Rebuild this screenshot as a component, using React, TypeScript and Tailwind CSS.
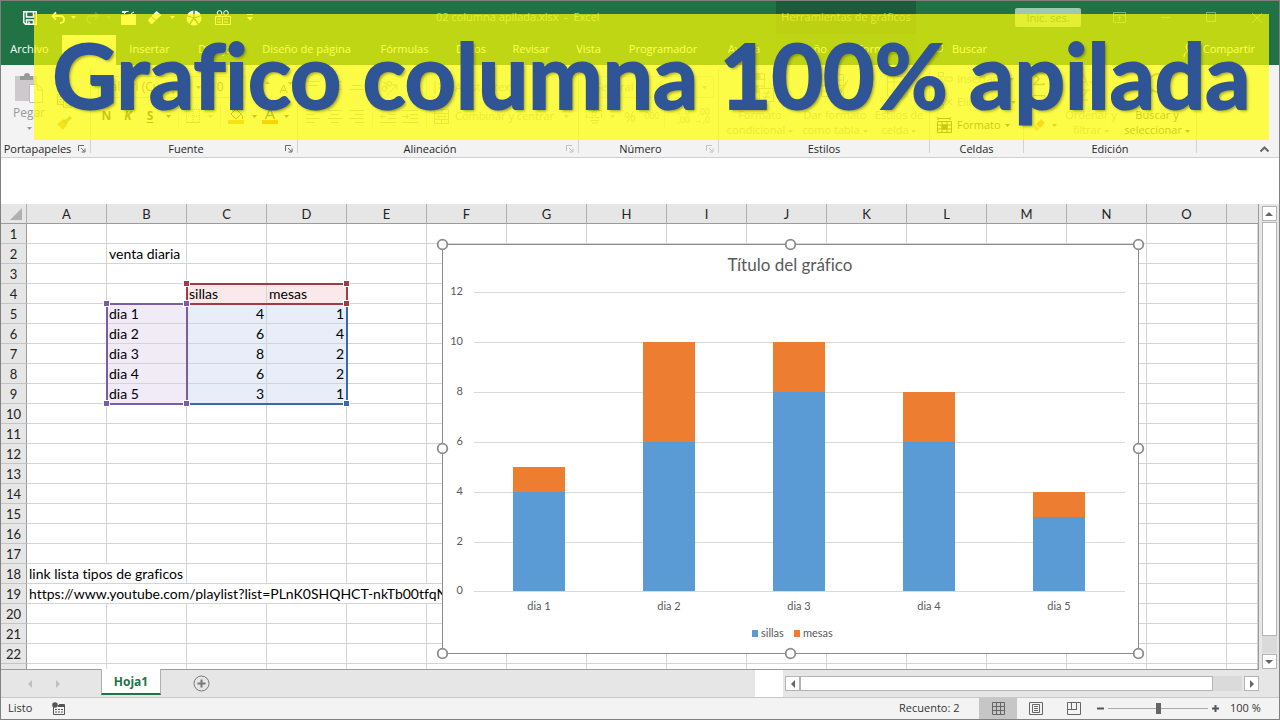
import type { ReactNode } from 'react';

const UI = "font-['Open_Sans','Noto_Sans',sans-serif]";
const CELL = "font-['Lato','Liberation_Sans',sans-serif] [font-variant-ligatures:none]";

const letters = 'ABCDEFGHIJKLMNO'.split('');

const days = [
  { name: 'dia 1', sillas: 4, mesas: 1 },
  { name: 'dia 2', sillas: 6, mesas: 4 },
  { name: 'dia 3', sillas: 8, mesas: 2 },
  { name: 'dia 4', sillas: 6, mesas: 2 },
  { name: 'dia 5', sillas: 3, mesas: 1 },
];

function Icon({ w = 16, h = 16, className = '', children }: { w?: number; h?: number; className?: string; children: ReactNode }) {
  return (
    <svg width={w} height={h} viewBox={`0 0 ${w} ${h}`} fill="none" stroke="currentColor" className={`shrink-0 ${className}`} aria-hidden="true">
      {children}
    </svg>
  );
}

function Caret({ className = '' }: { className?: string }) {
  return (
    <Icon w={5} h={3} className={className}>
      <path d="M0 0h5L2.5 3z" fill="currentColor" stroke="none" />
    </Icon>
  );
}

function Launcher() {
  return (
    <Icon w={8} h={8}>
      <path d="M.5 6V.5H6M3 3l3.500 3.500M7 3.500V7H3.500" />
    </Icon>
  );
}

/* ---------- title bar and tabs ---------- */

const tabs = [
  { label: 'Insertar', w: 'w-[67px]' },
  { label: 'Dibujo', w: 'w-[64px]' },
  { label: 'Diseño de página', w: 'w-[119px]' },
  { label: 'Fórmulas', w: 'w-[77px]' },
  { label: 'Datos', w: 'w-[56px]' },
  { label: 'Revisar', w: 'w-[64px]' },
  { label: 'Vista', w: 'w-[51px]' },
  { label: 'Programador', w: 'w-[98px]' },
  { label: 'Ayuda', w: 'w-[64px]' },
];

function TitleBar() {
  return (
    <div className="grid h-[33px] grid-cols-[435px_340px_140px_1fr] bg-[#217346] text-white">
      <div className="flex items-center pl-[22px]">
        <button aria-label="Guardar" className="flex w-[28px]">
          <Icon w={14} h={14}><path d="M.75.75h12.500v12.500H2.500L.75 11.500zM3.500 1v5h7V1M3.500 13V9h7v4M6 10.500v2.500" strokeWidth="1.5" /></Icon>
        </button>
        <button aria-label="Deshacer" className="flex w-[35px] items-center gap-1.5">
          <Icon w={14} h={14}><path d="M5 1.500L1.500 5 5 8.500M1.500 5H9c3 0 4 2 4 3.500S12 12 9 12" strokeWidth="1.8" /></Icon>
          <Caret />
        </button>
        <button aria-label="Rehacer" className="flex w-[35px] items-center gap-1.5 opacity-20">
          <Icon w={14} h={14}><path d="M9 1.500L12.500 5 9 8.500M12.500 5H5C2 5 1 7 1 8.500S2 12 5 12" strokeWidth="1.8" /></Icon>
          <Caret />
        </button>
        <button aria-label="Abrir" className="flex w-[27px]">
          <Icon w={16} h={14}><path d="M0 4h7l1-1h7v11H0zM1 0h4v2H1zM8 1h4" fill="currentColor" stroke="none" /><path d="M3.500 3V.5h4M10 2.500l3-1.500" /></Icon>
        </button>
        <button aria-label="Borrar" className="flex w-[38px] items-center gap-2">
          <Icon w={14} h={13}><path d="M8.500 0l5 4-5.500 5-4.500-4zM3 5.500L7.500 9.500 4.500 13H3L0 9.500z" fill="currentColor" stroke="none" /></Icon>
          <Caret />
        </button>
        <button aria-label="Gráfico circular" className="flex w-[29px]">
          <Icon w={16} h={16}><circle cx="8" cy="8" r="7.500" fill="currentColor" stroke="none" /><path d="M8 8V0M8 8l7.500-2.500M8 8l5 7M8 8l-5 7M8 8L.5 5.500" stroke="#217346" strokeWidth="1.300" /></Icon>
        </button>
        <button aria-label="Tabla" className="flex w-[32px]">
          <Icon w={16} h={16}><path d="M.5 6.500h15v8H.5zM2 9h4M9 9h4M2 12h4M9 12h4M7.500 7v8" /><circle cx="4.500" cy="3" r="2.300" /><circle cx="11" cy="3" r="2.300" /></Icon>
        </button>
        <button aria-label="Personalizar barra" className="flex">
          <Icon w={6} h={7}><path d="M0 .5h6" /><path d="M0 3h6L3 6.500z" fill="currentColor" stroke="none" /></Icon>
        </button>
      </div>
      <div className="flex items-center whitespace-pre text-[11px] text-white/60">02 columna apilada.xlsx  -  Excel</div>
      <div className="flex items-center justify-center whitespace-nowrap bg-[#1c5c3a] text-[11px] text-white/60">Herramientas de gráficos</div>
      <div className="flex items-center justify-end">
        <button className="mr-8 h-[19px] w-[66px] rounded-xs bg-[#a0c8b1] text-[11px] leading-[18px] text-[#217346]">Inic. ses.</button>
        <div className="flex gap-[34px] pr-[16px] text-white/40">
          <button aria-label="Opciones de la cinta"><Icon w={13} h={11}><path d="M.5.5h12v10H.5zM1 3h11M6.500 9V5M4.500 6.500l2-2 2 2" /></Icon></button>
          <button aria-label="Minimizar"><Icon w={12} h={11}><path d="M1 5.500h9" /></Icon></button>
          <button aria-label="Maximizar"><Icon w={11} h={11}><path d="M.5.5h9v9h-9z" /></Icon></button>
          <button aria-label="Cerrar"><Icon w={12} h={12}><path d="M1 1l10 10M11 1L1 11" /></Icon></button>
        </div>
      </div>
    </div>
  );
}

function TabBar() {
  return (
    <nav className="flex h-[31px] items-stretch whitespace-nowrap bg-[#217346] text-[11px] text-white">
      <button className="w-[61px] pr-1">Archivo</button>
      <button className="mt-px w-[54px] bg-[#f3f3f3] text-[#217346]">Inicio</button>
      {tabs.map((t) => (
        <button key={t.label} className={t.w}>{t.label}</button>
      ))}
      <div className="flex w-[140px] bg-[#1f6d42]">
        <button className="w-[66px]">Diseño</button>
        <button className="w-[74px]">Formato</button>
      </div>
      <label className="flex items-center gap-2 pl-[14px]">
        <Icon w={14} h={14}><circle cx="9" cy="5" r="4" /><path d="M6 8L.5 13.500" strokeWidth="1.300" /></Icon>
        <input type="text" aria-label="Buscar" placeholder="Buscar" className="w-[60px] bg-transparent outline-none placeholder:text-white" />
      </label>
      <button className="ml-auto flex items-center gap-1.5 pr-[24px]">
        <Icon w={14} h={15}><circle cx="7" cy="5" r="4" /><path d="M1 15c0-3 2-5 4-6M10 12h4M12 10v4" /></Icon>
        Compartir
      </button>
    </nav>
  );
}

/* ---------- ribbon ---------- */

function Group({ title, w, launcher, dimLauncher, children }: { title: string; w: string; launcher?: boolean; dimLauncher?: boolean; children: ReactNode }) {
  return (
    <section className={`flex shrink-0 ${w}`}>
      <div className="flex min-w-0 flex-1 flex-col">
        <div className="h-[75px]">{children}</div>
        <div className="flex h-[17px] items-center">
          <h2 className={`flex-1 text-center text-[11px] leading-4 text-[#262626] ${launcher ? 'pr-1' : ''}`}>{title}</h2>
          {launcher && (
            <button aria-label={`Más opciones de ${title}`} className={`mr-1 ${dimLauncher ? 'text-[#c0c0c0]' : 'text-[#666]'}`}><Launcher /></button>
          )}
        </div>
      </div>
      <div className="my-1 w-px bg-[#d2d2d2]" />
    </section>
  );
}

function Lines({ rows }: { rows: [number, number][] }) {
  return (
    <Icon w={14} h={13}>
      {rows.map(([x, w], i) => <path key={i} d={`M${x} ${i * 4 + 0.5}h${w}`} />)}
    </Icon>
  );
}

function Ribbon() {
  return (
    <div className="flex h-[93px] overflow-hidden border-b border-[#d0d0d0] bg-[#f3f3f3] text-[11px] text-[#444]">
      <Group title="Portapapeles" w="w-[90px]" launcher>
        <div className="flex text-[#999]">
          <button className="flex w-[56px] flex-col items-center pt-2 text-[12px] leading-4">
            <Icon w={28} h={30}>
              <path d="M0 3h22v25H0z" fill="#cdc9cd" stroke="none" />
              <path d="M5 3h4a3 3 0 016 0h3v4H5z" fill="#999" stroke="none" />
              <path d="M14.500 11.500h8l5 5v13h-13z" fill="#fafafa" stroke="#bbb" /><path d="M22.500 12v5h5" stroke="#bbb" />
            </Icon>
            <span className="pt-0.5">Pegar</span>
            <Caret className="mt-1.5" />
          </button>
          <div className="flex flex-col gap-2 pt-[29px] text-[#999]">
            <button aria-label="Copiar"><Icon w={15} h={14}><path d="M.5.5h7v10h-7zM2 3h4M2 5.500h3M2 8h3" /><path d="M6.500 3.500h8v10h-8zM8 6.500h5M8 9h5M8 11.500h5" fill="#f3f3f3" /></Icon></button>
            <button aria-label="Copiar formato"><Icon w={15} h={14}><path d="M0 8l5-4 5 5-4 5z" fill="#e0a060" stroke="none" /><path d="M8 6l6-5M6 4l4 4" strokeWidth="3" /></Icon></button>
          </div>
        </div>
      </Group>

      <Group title="Fuente" w="w-[207px]" launcher>
        <div className="flex flex-col gap-[7px] pt-[11px] pl-[7px]">
          <div className="flex items-center text-[12px] text-[#777]">
            <button className="flex h-[22px] w-[108px] items-center justify-between border border-[#d0d0d0] px-1 whitespace-nowrap">Calibri (Cuerpo)<Caret /></button>
            <button className="flex h-[22px] w-[40px] items-center justify-between border border-l-0 border-[#d0d0d0] px-1">10<Caret /></button>
            <button aria-label="Aumentar tamaño" className="flex w-[25px] justify-end"><Icon w={16} h={14}><path d="M1 13L5 3l4 10M2.500 10h5" /><path d="M10 4l2.500-3L15 4z" fill="currentColor" stroke="none" /></Icon></button>
            <button aria-label="Disminuir tamaño" className="flex w-[22px] justify-end"><Icon w={14} h={14}><path d="M1 13l3.500-8L8 13M2 10.500h5" /><path d="M9 2l2.500 3L14 2z" fill="currentColor" stroke="none" /></Icon></button>
          </div>
          <div className="flex h-[22px] items-center">
            <button className="w-[17px] text-[12px] font-bold">N</button>
            <button className="w-[26px] text-[12px] font-bold italic">K</button>
            <button className="w-[18px] text-[12px] font-bold underline underline-offset-2">S</button>
            <button aria-label="Subrayado" className="flex w-[19px] justify-center"><Caret /></button>
            <div className="mr-[7px] h-full w-px bg-[#ddd]" />
            <button aria-label="Bordes" className="flex w-[34px] items-center gap-2 text-[#aaa]">
              <Icon w={14} h={14}><path d="M.5 0v14M7 0v14M13.500 0v14M0 .5h14M0 7h14" strokeDasharray="1 1" /><path d="M0 13.500h14" /></Icon><Caret />
            </button>
            <div className="mr-[7px] h-full w-px bg-[#ddd]" />
            <button aria-label="Color de relleno" className="flex w-[34px] items-center gap-2">
              <Icon w={16} h={16}><path d="M3 6l5-5 5 5-5 5zM5 4V0M13 6c2 2 2 4 1 5" /><path d="M0 12h16v4H0z" fill="#ed9a3a" stroke="none" /></Icon><Caret />
            </button>
            <button aria-label="Color de fuente" className="flex items-center gap-1.5">
              <Icon w={16} h={16}><path d="M3.500 11L8 0.500l4.500 10.500M5 7.500h6" strokeWidth="1.500" /><path d="M0 12h16v4H0z" fill="#f26b1d" stroke="none" /></Icon><Caret />
            </button>
          </div>
        </div>
      </Group>

      <Group title="Alineación" w="w-[281px]" launcher dimLauncher>
        <div className="flex flex-col gap-[7px] pt-[11px] pl-2 text-[#b4b4b4]">
          <div className="flex h-[22px] items-center">
            <button aria-label="Alinear arriba" className="w-[22px]"><Lines rows={[[0, 14], [2, 10], [0, 0]]} /></button>
            <button aria-label="Alinear en medio" className="w-[22px]"><Lines rows={[[0, 14], [2, 10], [0, 14]]} /></button>
            <button aria-label="Alinear abajo" className="w-[22px]"><Lines rows={[[0, 0], [2, 10], [0, 14]]} /></button>
            <div className="mr-[7px] h-full w-px bg-[#ddd]" />
            <button aria-label="Orientación" className="w-[46px]">
              <Icon w={18} h={18}>
                <path d="M7 17L17 7M17 12V7h-5" />
                <g transform="rotate(-45 6 9)"><circle cx="3.500" cy="9" r="2.300" /><path d="M5.800 6.500v5M8.200 3.500v8" /><circle cx="10.500" cy="9" r="2.300" /></g>
              </Icon>
            </button>
            <div className="mr-[7px] h-full w-px bg-[#ddd]" />
            <button className="flex items-center gap-1.5 whitespace-nowrap"><Icon w={15} h={15}><path d="M1 1v13M4 4h9M4 8h8c3 0 3 4 0 4H8" /></Icon>Ajustar texto</button>
          </div>
          <div className="flex h-[22px] items-center">
            <button aria-label="Izquierda" className="w-[22px]"><Lines rows={[[0, 14], [0, 9], [0, 14], [0, 9]]} /></button>
            <button aria-label="Centrar" className="w-[22px]"><Lines rows={[[0, 14], [3, 8], [0, 14], [3, 8]]} /></button>
            <button aria-label="Derecha" className="w-[22px]"><Lines rows={[[0, 14], [5, 9], [0, 14], [5, 9]]} /></button>
            <div className="mr-[7px] h-full w-px bg-[#ddd]" />
            <button aria-label="Disminuir sangría" className="w-[22px]"><Icon w={16} h={13}><path d="M0 .5h16M8 4.500h8M8 8.500h8M0 12.500h16M0 6.500h6M3 4L.5 6.500 3 9" /></Icon></button>
            <button aria-label="Aumentar sangría" className="w-[24px]"><Icon w={16} h={13}><path d="M0 .5h16M8 4.500h8M8 8.500h8M0 12.500h16M0 6.500h6M4 4l2.500 2.500L4 9" /></Icon></button>
            <div className="mr-[7px] h-full w-px bg-[#ddd]" />
            <button className="flex items-center gap-1.5 whitespace-nowrap">
              <Icon w={15} h={15}><path d="M.5.5h14v14H.5zM0 4.500h15M0 10.500h15M7.500 0v4M7.500 11v4M3 7.500h9M5 5.500l-2 2 2 2M10 5.500l2 2-2 2" /></Icon>
              Combinar y centrar<Caret className="ml-1" />
            </button>
          </div>
        </div>
      </Group>

      <Group title="Número" w="w-[140px]" launcher dimLauncher>
        <div className="flex flex-col gap-[7px] pt-[11px] pl-[7px] text-[#b4b4b4]">
          <button className="flex h-[22px] w-[128px] items-center justify-between border border-[#ddd] px-1.5">General<Caret /></button>
          <div className="flex h-[22px] items-center">
            <button aria-label="Formato de moneda" className="flex w-[34px] items-center gap-2"><Icon w={16} h={15}><path d="M.5 1.500h15v7H.5z" strokeDasharray="4 2" /><circle cx="8" cy="5" r="2" /><path d="M5 11.500h8M6 14h6" /></Icon><Caret /></button>
            <button className="w-[20px] text-[14px]">%</button>
            <button className="w-[24px] text-[9px]">000</button>
            <div className="mr-[5px] h-full w-px bg-[#ddd]" />
            <button className="w-[20px] text-right text-[9px] leading-2">←0<br />,00</button>
            <button className="w-[20px] text-right text-[9px] leading-2">,00<br />→,0</button>
          </div>
        </div>
      </Group>

      <Group title="Estilos" w="w-[211px]">
        <div className="flex justify-center gap-[5px] pt-2 leading-[15px] whitespace-nowrap text-[#b4b4b4]">
          <button className="flex w-[72px] flex-col items-center gap-1">
            <Icon w={28} h={30}><path d="M.5.5h18v25H.5zM.5 6.500h18M.5 13h18M.5 19.500h18M6.500.5v25" /><path d="M7 1h7v5H7zM7 13h5v6H7z" fill="currentColor" /><path d="M13.500 15.500h14v13h-14z" fill="#f3f3f3" /><path d="M17 20h7M17 24h7M23 17l-5 10" /></Icon>
            <span>Formato<br />condicional <Caret className="inline" /></span>
          </button>
          <button className="flex w-[68px] flex-col items-center gap-1">
            <Icon w={28} h={30}><path d="M.5 1.500h22v22H.5zM.5 7h22M.5 12.500h22M.5 18h22M8 1.500v22M15 1.500v22" /><path d="M27 7L16 21l-6 6 8-3z" fill="currentColor" /></Icon>
            <span>Dar formato<br />como tabla <Caret className="inline" /></span>
          </button>
          <button className="flex w-[50px] flex-col items-center gap-1">
            <Icon w={28} h={30}><path d="M2.500 3.500h20v20h-20zM2.500 9h20M9 3.500v20" /><path d="M27 9L18 22l-7 5 9-2z" fill="currentColor" /></Icon>
            <span>Estilos de<br />celda <Caret className="inline" /></span>
          </button>
        </div>
      </Group>

      <Group title="Celdas" w="w-[94px]">
        <div className="flex flex-col gap-[7px] pt-[6px] pl-[7px] text-[#b4b4b4]">
          <button className="flex h-4 items-center gap-1"><Icon><path d="M1.500 1.500h5v4h-5zM1.500 10.500h5v4h-5zM8 6h7v4H8zM2 8h4" /></Icon>Insertar<Caret className="ml-2 text-[#777]" /></button>
          <button className="flex h-4 items-center gap-1"><Icon><path d="M1.500 1.500h5v4h-5zM1.500 10.500h5v4h-5zM9 5l6 6M15 5l-6 6" /></Icon>Eliminar<Caret className="ml-2 text-[#777]" /></button>
          <button className="flex h-4 items-center gap-1 text-[#444]"><Icon><path d="M1 1.500h12M1 0v3M13 0v3M.5 4.500h14v11H.5zM.5 8h14M.5 12h14M5 4.500v11M10 4.500v11" /><path d="M5 8h5v4H5z" fill="currentColor" /></Icon>Formato<Caret /></button>
        </div>
      </Group>

      <Group title="Edición" w="w-[173px]">
        <div className="flex whitespace-nowrap text-[#b4b4b4]">
          <div className="flex w-[37px] flex-col gap-[7px] pt-[6px] pl-2">
            <button aria-label="Autosuma" className="flex h-4 items-center gap-1.5 text-[#888]"><Icon w={14} h={14}><path d="M12 3V1.500H2L7 7l-5 5.500h10V11" strokeWidth="1.500" /></Icon><Caret /></button>
            <button aria-label="Rellenar" className="flex h-4 items-center gap-1.5 text-[#888]"><Icon w={14} h={14}><path d="M1 .5h12v13H1zM7 4v7M4 8l3 3 3-3" /></Icon><Caret /></button>
            <button aria-label="Borrar" className="flex h-4 items-center gap-1.5 text-[#888]"><Icon w={14} h={14}><path d="M9 1l4 4-5 5-4-4z" fill="#f08060" stroke="none" /><path d="M3.500 6.500l4 4-3 2.500-3-3z" fill="#f4a890" stroke="none" /></Icon><Caret /></button>
          </div>
          <button className="flex w-[60px] flex-col items-center gap-1 pt-2 leading-[15px]">
            <Icon w={28} h={30}><path d="M2 13L6.500 2 11 13M3.500 9h6M3 17h8L3 27h8M20 4v22M16 22l4 4 4-4M14 9h12l-6 6z" strokeWidth="1.500" /></Icon>
            <span>Ordenar y<br />filtrar <Caret className="inline" /></span>
          </button>
          <button className="flex w-[72px] flex-col items-center gap-1 pt-2 leading-[15px] text-[#555]">
            <Icon w={28} h={30} className="text-[#888]"><circle cx="15" cy="10" r="9" strokeWidth="2" /><path d="M9 17L1 28" strokeWidth="3" /></Icon>
            <span>Buscar y<br />seleccionar <Caret className="inline" /></span>
          </button>
        </div>
      </Group>
      <button aria-label="Contraer la cinta" className="mt-auto mr-2.5 mb-1 ml-auto text-[#666]"><Icon w={9} h={8}><path d="M.5 6.500l4-4 4 4" strokeWidth="2" /></Icon></button>
    </div>
  );
}

/* ---------- worksheet ---------- */

const line = 'border-r border-b border-[#d4d4d4] px-0.5';

function bodyCells(row: number) {
  const blanks = (from: number) =>
    Array.from({ length: 16 - from }, (_, i) => <td key={from + i} className={line} />);

  if (row === 2) return [<td key="a" className={line} />, <td key="b" className={`${line} whitespace-nowrap`}>venta diaria</td>, ...blanks(2)];
  if (row === 4)
    return [
      ...blanks(14),
      <td key="s" className={`${line} bg-[#fae9ea]`}>sillas</td>,
      <td key="m" className={`${line} bg-[#fae9ea]`}>mesas</td>,
      ...blanks(4),
    ];
  if (row >= 5 && row <= 9) {
    const d = days[row - 5];
    return [
      <td key="a" className={line} />,
      <td key="b" className={`${line} bg-[#f1ebf7]`}>{d.name}</td>,
      <td key="c" className={`${line} bg-[#e7eef9] text-right`}>{d.sillas}</td>,
      <td key="d" className={`${line} bg-[#e7eef9] text-right`}>{d.mesas}</td>,
      ...blanks(4),
    ];
  }
  if (row === 18) return [<td key="a" colSpan={2} className={`${line} whitespace-nowrap`}>link lista tipos de graficos</td>, ...blanks(2)];
  if (row === 19)
    return [
      <td key="a" colSpan={6} className={`${line} overflow-hidden whitespace-nowrap`}>https://www.youtube.com/playlist?list=PLnK0SHQHCT-nkTb00tfqN</td>,
      ...blanks(6),
    ];
  return blanks(0);
}

function Sheet() {
  return (
    <table className={`w-full table-fixed border-separate border-spacing-0 bg-white text-[14px] leading-[18px] text-black ${CELL}`}>
      <colgroup>
        <col className="w-[26px]" />
        {letters.map((l) => <col key={l} className="w-[80px]" />)}
        <col />
      </colgroup>
      <thead>
        <tr className="h-[20px] bg-[#e6e6e6] text-[13px] text-[#222]">
          <th className="border-r border-b border-[#b0b0b0] border-b-[#9b9b9b] p-0">
            <Icon w={12} h={12} className="ml-auto mr-1"><path d="M12 0v12H0z" fill="#b0b0b0" stroke="none" /></Icon>
          </th>
          {letters.map((l) => (
            <th key={l} scope="col" className="border-r border-b border-[#b0b0b0] border-b-[#9b9b9b] p-0 font-normal">{l}</th>
          ))}
          <th className="border-b border-[#9b9b9b]" />
        </tr>
      </thead>
      <tbody>
        {Array.from({ length: 23 }, (_, i) => i + 1).map((row) => (
          <tr key={row} className="h-[20px]">
            <th scope="row" className="border-r border-b border-[#c4c4c4] border-r-[#9b9b9b] bg-[#e6e6e6] p-0 text-[13px] font-normal text-[#222]">{row < 23 ? row : ''}</th>
            {bodyCells(row)}
          </tr>
        ))}
      </tbody>
    </table>
  );
}

function RangeMarks() {
  const handle = (x: number, y: number, fill: string) => (
    <rect key={`${x}-${y}`} x={x - 3.5} y={y - 3.5} width="6" height="6" fill={fill} stroke="#fff" strokeWidth="1" />
  );
  return (
    <svg width="250" height="130" viewBox="100 280 250 130" className="pointer-events-none absolute top-[76px] left-[99px]" fill="none" aria-hidden="true">
      <path d="M187 404h160V304" stroke="#3a68ab" strokeWidth="2" />
      <path d="M187 284h160v20H187z" stroke="#a23c44" strokeWidth="2" />
      <path d="M107 304h80v100h-80z" stroke="#7b5ca5" strokeWidth="2" />
      {handle(347, 404, '#3a68ab')}
      {[[187, 284], [347, 284], [347, 304]].map(([x, y]) => handle(x, y, '#a23c44'))}
      {[[107, 304], [187, 304], [107, 404], [187, 404]].map(([x, y]) => handle(x, y, '#7b5ca5'))}
    </svg>
  );
}

function Chart() {
  const y = (v: number) => Math.round(591.4 - v * 24.95);
  return (
    <svg width="709" height="422" viewBox="436 238 709 422" className={`absolute top-[34px] left-[435px] ${CELL}`} role="img" aria-label="Título del gráfico">
      <rect x="442.500" y="244.500" width="696" height="409" fill="#fff" stroke="#8c8c8c" />
      <text x="790" y="271" textAnchor="middle" fontSize="17" fill="#595959">Título del gráfico</text>
      {[0, 2, 4, 6, 8, 10, 12].map((v) => (
        <g key={v}>
          <path d={`M474 ${y(v) + 0.5}H1125`} stroke="#d9d9d9" />
          <text x="463" y={y(v) + 3} textAnchor="end" fontSize="11" fill="#595959">{v}</text>
        </g>
      ))}
      {days.map((d, i) => {
        const x = 513 + i * 130;
        const mid = y(d.sillas);
        const top = y(d.sillas + d.mesas);
        return (
          <g key={d.name}>
            <rect x={x} y={mid} width="52" height={591 - mid} fill="#5b9bd5" />
            <rect x={x} y={top} width="52" height={mid - top} fill="#ed7d31" />
            <text x={x + 26} y="610" textAnchor="middle" fontSize="11" fill="#595959">{d.name}</text>
          </g>
        );
      })}
      <rect x="752" y="630" width="6" height="7" fill="#5b9bd5" />
      <text x="761" y="637" fontSize="11" fill="#595959">sillas</text>
      <rect x="794" y="630" width="6" height="7" fill="#ed7d31" />
      <text x="803" y="637" fontSize="11" fill="#595959">mesas</text>
      {[442.500, 790.500, 1138.500].flatMap((cx) =>
        [244.500, 448.500, 653.500]
          .filter((cy) => !(cx === 790.500 && cy === 448.500))
          .map((cy) => <circle key={`${cx}-${cy}`} cx={cx} cy={cy} r="4.800" fill="#fff" stroke="#8c8c8c" strokeWidth="1.800" />),
      )}
    </svg>
  );
}

function ScrollButton({ label, d, size }: { label: string; d: string; size: string }) {
  return (
    <button aria-label={label} className={`flex shrink-0 items-center justify-center border border-[#b4b4b4] bg-white text-[#666] ${size}`}>
      <Icon w={8} h={8}><path d={d} fill="currentColor" stroke="none" /></Icon>
    </button>
  );
}

function SheetTabs() {
  return (
    <div className="flex h-[28px] shrink-0 items-start bg-[#e6e6e6]">
      <div className="flex h-full flex-1 items-start border-t border-[#9b9b9b]">
        <div className="flex h-full w-[100px] items-center gap-5 pl-[25px] text-[#c0c0c0]">
          <button aria-label="Hoja anterior"><Icon w={8} h={8}><path d="M6 0v8L2 4z" fill="currentColor" stroke="none" /></Icon></button>
          <button aria-label="Hoja siguiente"><Icon w={8} h={8}><path d="M2 0v8l4-4z" fill="currentColor" stroke="none" /></Icon></button>
        </div>
        <button className="-mt-px h-[26px] w-[60px] border-x border-b-2 border-x-[#b0b0b0] border-b-[#217346] bg-white pt-0.5 text-[12px] font-bold text-[#217346]">Hoja1</button>
        <button aria-label="Hoja nueva" className="mt-[5px] ml-[32px] text-[#777]"><Icon w={17} h={17}><circle cx="8.500" cy="8.500" r="7.500" /><path d="M8.500 4.500v8M4.500 8.500h8" strokeWidth="2" /></Icon></button>
      </div>
      <div className="h-full w-[28px] border-t border-[#9b9b9b] bg-white" />
      <div className="flex h-full w-[476px] items-center border-t border-[#9b9b9b] pl-0.5">
        <ScrollButton label="Desplazar a la izquierda" d="M6 0v8L2 4z" size="h-[15px] w-[15px]" />
        <div className="flex h-[15px] flex-1 bg-[#dadada]"><div className="w-[413px] border border-[#b4b4b4] bg-white" /></div>
        <div className="w-0.5" />
        <ScrollButton label="Desplazar a la derecha" d="M2 0v8l4-4z" size="h-[15px] w-[15px]" />
      </div>
      <div className="w-[20px]" />
    </div>
  );
}

function StatusBar() {
  return (
    <footer className="flex h-[22px] shrink-0 items-center border-t border-[#c8c8c8] bg-[#f3f3f3] text-[11px] text-[#333]">
      <span className="w-[51px] pl-[7px]">Listo</span>
      <button aria-label="Grabar macro" className="text-[#555]"><Icon w={14} h={13}><path d="M1.500 4v8.500h11V2.500H7" /><path d="M6 3h7v2H6z" fill="currentColor" stroke="none" /><path d="M3 7.500h9M3 10h9" strokeDasharray="2 1" /><circle cx="3" cy="3" r="2.800" fill="currentColor" stroke="none" /></Icon></button>
      <span className="ml-auto w-[80px]">Recuento: 2</span>
      <div className="flex h-full text-[#666]">
        <button aria-label="Normal" className="flex w-[38px] items-center justify-center bg-[#c6c6c6]"><Icon w={13} h={13}><path d="M.5.5h12v12H.5zM4.500 0v13M8.500 0v13M0 4.500h13M0 8.500h13" /></Icon></button>
        <button aria-label="Diseño de página" className="flex w-[38px] items-center justify-center"><Icon w={14} h={13}><path d="M.5.5h13v12H.5zM3.500 2.500h7v8h-7zM5 4.500h4M5 6.500h4M5 8.500h4" /></Icon></button>
        <button aria-label="Salto de página" className="flex w-[38px] items-center justify-center"><Icon w={14} h={13}><path d="M.5.5h13v12H.5zM4.500 0v7.500M9.500 0v7.500M4 7.500H0M4 7.500h6" /></Icon></button>
      </div>
      <button aria-label="Alejar" className="ml-[4px] text-[#555]"><Icon w={7} h={7}><path d="M0 3.500h7" strokeWidth="2" /></Icon></button>
      <input
        type="range"
        aria-label="Zoom"
        min={0}
        max={200}
        defaultValue={100}
        className="mx-[4px] h-[11px] w-[100px] appearance-none bg-[linear-gradient(#aaa,#aaa)] bg-[length:100%_1px] bg-center bg-no-repeat [&::-webkit-slider-thumb]:h-[11px] [&::-webkit-slider-thumb]:w-[5px] [&::-webkit-slider-thumb]:appearance-none [&::-webkit-slider-thumb]:bg-[#666]"
      />
      <button aria-label="Acercar" className="text-[#555]"><Icon w={7} h={7}><path d="M0 3.500h7M3.500 0v7" strokeWidth="2" /></Icon></button>
      <span className="w-[60px] pl-[11px] whitespace-nowrap">100 %</span>
    </footer>
  );
}

export default function App() {
  return (
    <div className={`relative flex h-screen flex-col overflow-hidden border border-[#808080] bg-white ${UI}`}>
      <TitleBar />
      <TabBar />
      <Ribbon />
      <div className="h-[46px] shrink-0 bg-white" />
      <main className="flex min-h-0 flex-1 bg-[#e6e6e6]">
        <div className="relative min-w-0 flex-1 overflow-hidden border-r border-[#9b9b9b]">
          <Sheet />
          <RangeMarks />
          <Chart />
        </div>
        <div className="flex w-[20px] flex-col items-center gap-px pt-[2px]">
          <ScrollButton label="Desplazar arriba" d="M0 6h8L4 2z" size="h-[15px] w-[15px]" />
          <div className="flex w-[15px] flex-1 flex-col bg-[#dadada]"><div className="h-[414px] border border-[#b4b4b4] bg-white" /></div>
          <ScrollButton label="Desplazar abajo" d="M0 2h8L4 6z" size="h-[15px] w-[15px]" />
        </div>
      </main>
      <SheetTabs />
      <StatusBar />
      <div className="pointer-events-none absolute top-[13px] right-[10px] left-[33px] flex h-[126px] items-center justify-center bg-[#ffff00]/71 pb-1.5">
        <h1 className={`text-[89px] leading-none font-bold whitespace-nowrap text-[#2f5597] [-webkit-text-stroke:2px_#2f5597] [text-shadow:2px_2px_3px_rgba(60,60,0,0.5)] ${CELL}`}>
          Grafico columna 100% apilada
        </h1>
      </div>
    </div>
  );
}
